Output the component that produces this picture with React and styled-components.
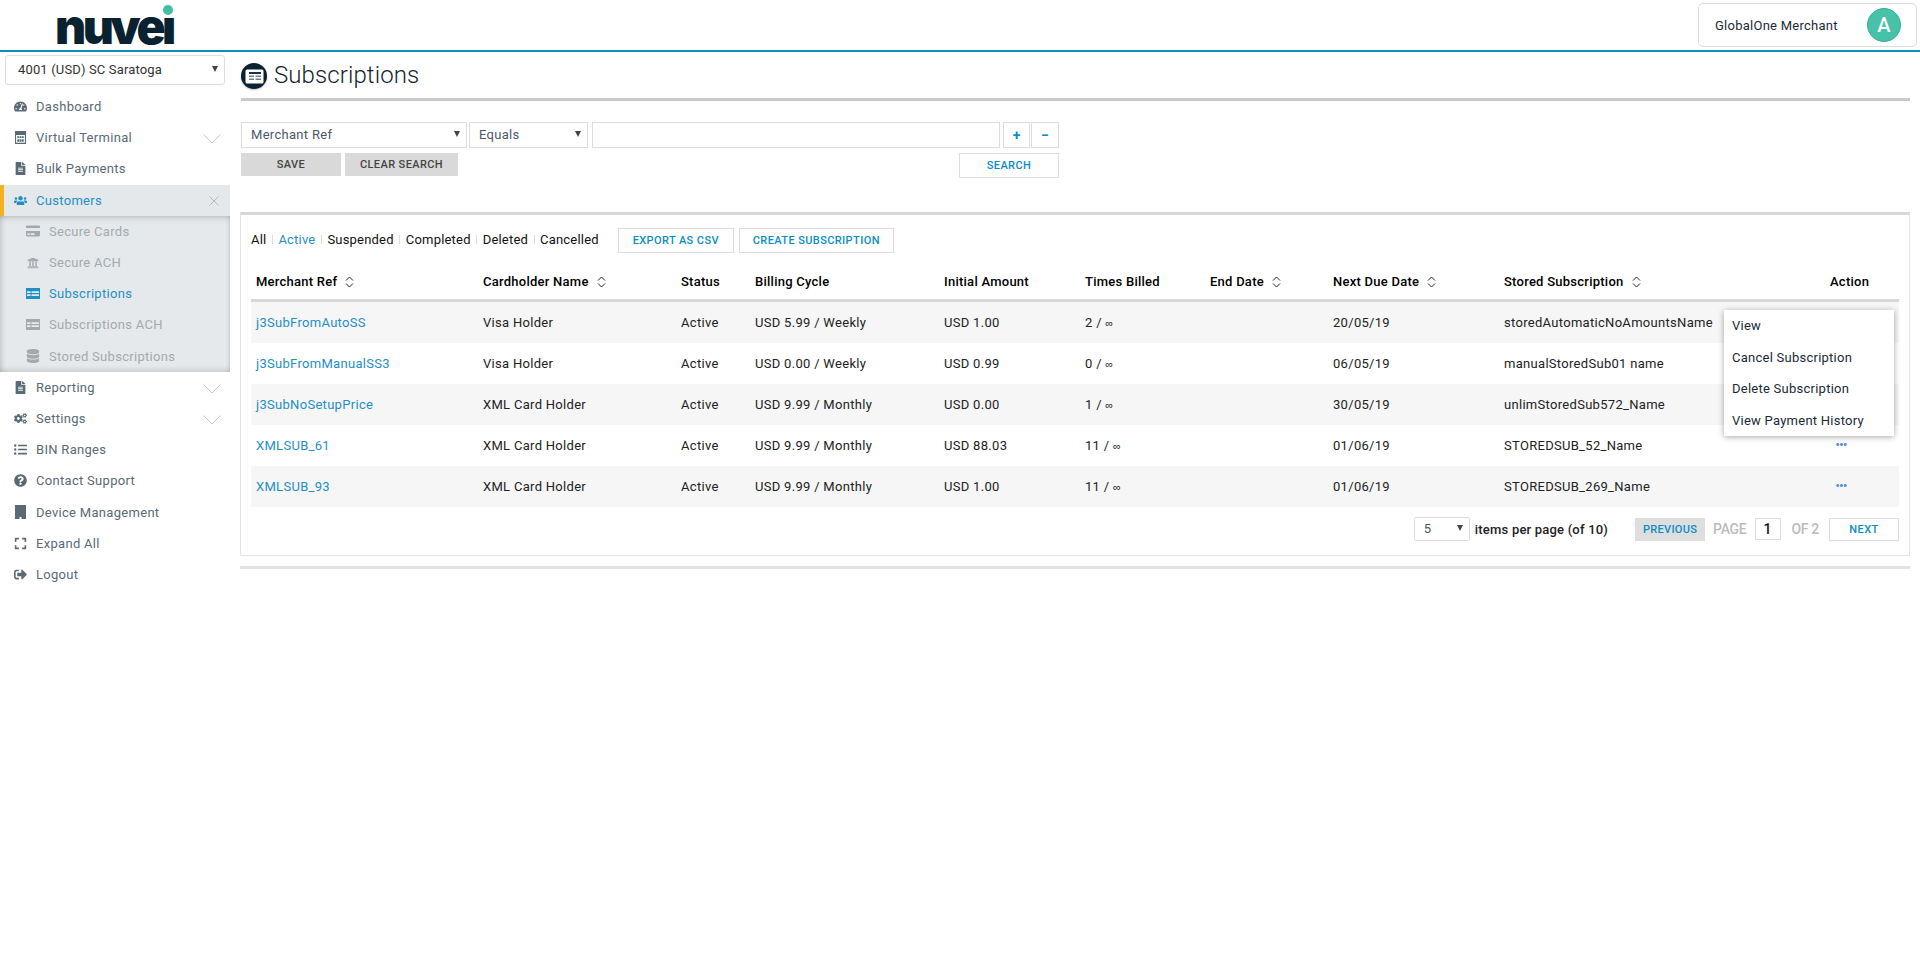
import React from 'react';
import styled, { createGlobalStyle } from 'styled-components';
import {
  FaTachometerAlt,
  FaFileAlt,
  FaUsers,
  FaCreditCard,
  FaUniversity,
  FaDatabase,
  FaCogs,
  FaListUl,
  FaQuestionCircle,
  FaExpand,
  FaSignOutAlt,
  FaEllipsisH,
} from 'react-icons/fa';

const GlobalStyle = createGlobalStyle`
  html, body {
    margin: 0;
    padding: 0;
    background: #fff;
    font-family: Roboto, "Liberation Sans", sans-serif;
    font-size: 13px;
    color: #111;
  }
  * { box-sizing: border-box; }
`;

const Page = styled.div`
  min-height: 969px;
  display: flex;
  flex-direction: column;
`;

const Header = styled.header`
  height: 52px;
  border-bottom: 2px solid #0b8dc4;
  display: flex;
  align-items: flex-start;
  justify-content: space-between;
  padding: 3px 3px 0 55px;
`;

const Logo = styled.div`
  position: relative;
  width: 120px;
  height: 48px;
  color: #0a2230;
  font-family: Inter, Roboto, sans-serif;
  font-weight: 900;
  font-size: 48px;
  line-height: 48px;
  letter-spacing: -3.5px;
`;

const LogoDot = styled.span`
  position: absolute;
  left: 108px;
  top: 2px;
  width: 10px;
  height: 10px;
  border-radius: 50%;
  background: #3fc0a5;
  box-shadow: 0 0 0 2px #fff;
`;

const UserBox = styled.div`
  width: 219px;
  height: 44px;
  border: 1px solid #ddd;
  border-radius: 5px;
  display: flex;
  align-items: center;
  justify-content: space-between;
  padding: 0 15px 0 16px;
  font-size: 13px;
  letter-spacing: 0.25px;
  color: #1a2a35;
`;

const Avatar = styled.span`
  width: 34px;
  height: 34px;
  border-radius: 50%;
  background: #45c2a8;
  border: 1px solid #3bb096;
  color: #fff;
  font-size: 20px;
  font-weight: 500;
  display: flex;
  align-items: center;
  justify-content: center;
`;

const Body = styled.div`
  display: flex;
  flex: 1;
`;

const Sidebar = styled.nav`
  width: 230px;
  flex: none;
  padding-top: 3px;
`;

const SelectBox = styled.div`
  position: relative;
  display: flex;
  align-items: center;
  flex: none;
  width: ${p => p.$w || 'auto'};
  height: ${p => p.$h || '26px'};
  padding: 0 0 2px ${p => p.$pad || '9px'};
  margin-left: ${p => p.$ml || '0'};
  border: 1px solid #ddd;
  border-radius: ${p => p.$radius || '0'};
  background: #fff;
  color: #4a5a66;
  letter-spacing: 0.3px;
  &::after {
    content: '';
    position: absolute;
    right: 6px;
    top: 50%;
    margin-top: -4px;
    border-left: 3px solid transparent;
    border-right: 3px solid transparent;
    border-top: 6px solid #444;
  }
`;

const AccountSelect = styled(SelectBox)`
  margin: 0 5px 6px;
  color: #333;
  letter-spacing: 0.15px;
`;

const NavItem = styled.a`
  display: flex;
  align-items: center;
  height: 31.2px;
  padding-left: ${p => (p.$active ? '9px' : '13px')};
  border-left: ${p => (p.$active ? '4px solid #f5b01f' : '0')};
  background: ${p => (p.$active ? '#e4e8ea' : 'transparent')};
  color: ${p => (p.$active ? '#1f8fc6' : '#5a6a75')};
  letter-spacing: 0.3px;
  position: relative;
`;

const NavIcon = styled.span`
  width: 14px;
  margin-right: 9px;
  display: flex;
  justify-content: center;
  font-size: 13px;
  flex: none;
`;

const Caret = styled.svg`
  position: absolute;
  right: ${p => p.$right || '9px'};
  top: ${p => p.$top || '12px'};
`;

const SubMenu = styled.div`
  background: #e6e9eb;
  box-shadow: inset 0 6px 6px -5px rgba(0, 0, 0, 0.22), inset 0 -6px 6px -5px rgba(0, 0, 0, 0.18),
    inset 6px 0 6px -5px rgba(0, 0, 0, 0.18), inset -4px 0 5px -4px rgba(0, 0, 0, 0.18);
`;

const SubItem = styled.a`
  display: flex;
  align-items: center;
  height: 31.2px;
  padding-left: 26px;
  color: ${p => (p.$active ? '#1f8fc6' : '#a3a9ae')};
  letter-spacing: 0.3px;
  ${NavIcon} {
    font-size: 14px;
  }
`;

const Main = styled.main`
  flex: 1;
  min-width: 0;
  padding: 0 10px 0 10px;
`;

const TitleBar = styled.div`
  height: 49px;
  margin-left: 1px;
  border-bottom: 3px solid #c5cbd0;
  display: flex;
  align-items: center;
  gap: 7px;
`;

const TitleIcon = styled.span`
  width: 26px;
  height: 26px;
  border-radius: 50%;
  background: #0a2230;
  display: flex;
  align-items: center;
  justify-content: center;
  margin-top: 2px;
  box-shadow: 0 1px 2px rgba(0, 0, 0, 0.25);
`;

const Title = styled.h1`
  margin: 0;
  font-size: 24px;
  font-weight: 300;
  letter-spacing: 0.1px;
  color: #15252f;
`;

const FilterForm = styled.div`
  width: 818px;
  margin: 21px 0 34px 1px;
`;

const FilterRow = styled.div`
  display: flex;
  align-items: center;
`;

const FilterActions = styled.div`
  display: flex;
  justify-content: space-between;
  align-items: flex-start;
  margin-top: 5px;
`;

const SearchInput = styled.input`
  flex: none;
  width: 408px;
  height: 26px;
  margin-left: 4px;
  border: 1px solid #ddd;
  background: #fff;
  outline: none;
`;

const SquareButton = styled.button`
  flex: none;
  width: ${p => p.$w};
  height: 26px;
  padding: 0;
  border: 1px solid #ddd;
  background: #fff;
  color: #0b8dc4;
  font: 700 14px Roboto, sans-serif;
  margin-left: ${p => p.$ml || '0'};
`;

const GreyButton = styled.button`
  width: ${p => p.$w};
  height: 23px;
  padding: 0;
  border: 0;
  background: #d9d9d9;
  color: #444;
  font: 500 11px Roboto, sans-serif;
  letter-spacing: 0.4px;
  margin-right: ${p => p.$mr || '0'};
`;

const OutlineButton = styled.button`
  width: ${p => p.$w};
  height: ${p => p.$h || '25px'};
  padding: 0;
  border: 1px solid #ddd;
  background: #fff;
  color: #0b8dc4;
  font: 500 11px Roboto, sans-serif;
  letter-spacing: 0.4px;
  margin-left: ${p => p.$ml || '0'};
`;

const Panel = styled.section`
  border: 1px solid #e5e5e5;
  border-top: 3px solid #d8d8d8;
  padding: 13px 10px 14px 10px;
`;

const TabRow = styled.div`
  display: flex;
  align-items: center;
  height: 25px;
`;

const Tab = styled.a`
  color: ${p => (p.$active ? '#1f8fc6' : '#111')};
  letter-spacing: 0.2px;
  padding-bottom: 2px;
  &:not(:last-of-type)::after {
    content: '';
    display: inline-block;
    width: 1px;
    height: 9px;
    background: #ddd;
    margin: 0 5.5px;
  }
`;

const TableWrap = styled.div`
  position: relative;
  margin-top: 10px;
`;

const Table = styled.table`
  width: 1648px;
  border-collapse: separate;
  border-spacing: 0;
  table-layout: fixed;
`;

const Th = styled.th`
  height: 39px;
  padding: 1px 5px 0;
  text-align: left;
  font-weight: 500;
  color: #000;
  letter-spacing: 0.25px;
  border-bottom: 3px solid #d8d8d8;
  white-space: nowrap;
`;

const Row = styled.tr`
  background: ${p => (p.$odd ? '#f6f6f6' : '#fff')};
`;

const Td = styled.td`
  height: 41px;
  padding: 0 5px 1px;
  color: #222;
  letter-spacing: 0.3px;
  white-space: nowrap;
`;

const RefLink = styled.a`
  color: #1f8fc6;
`;

const InfinityMark = styled.span`
  font-family: "Liberation Sans", sans-serif;
  font-size: 11px;
  letter-spacing: 0;
`;

const SortIcon = styled.svg`
  margin-left: 8px;
  vertical-align: -2px;
`;

const Dots = styled.span`
  display: inline-flex;
  align-items: center;
  justify-content: center;
  margin-left: ${p => (p.$open ? '0' : '6px')};
  width: ${p => (p.$open ? '21px' : 'auto')};
  height: ${p => (p.$open ? '25px' : 'auto')};
  padding-bottom: 3px;
  background: ${p => (p.$open ? '#a8a8a8' : 'transparent')};
  border-radius: 3px;
  color: #5b8fe8;
  font-size: 11px;
  vertical-align: middle;
`;

const Menu = styled.ul`
  position: absolute;
  top: 47px;
  right: 5px;
  width: 170px;
  height: 126px;
  margin: 0;
  padding: 0;
  list-style: none;
  background: #fff;
  box-shadow: 0 1px 6px rgba(0, 0, 0, 0.35);
`;

const MenuItem = styled.li`
  height: 31.5px;
  display: flex;
  align-items: center;
  padding-left: 8px;
  color: #1a2a35;
  letter-spacing: 0.25px;
`;

const Pager = styled.div`
  display: flex;
  align-items: center;
  justify-content: flex-end;
  height: 24px;
  margin-top: 10px;
`;

const PerPage = styled.span`
  margin: 0 27px 0 5px;
  font-weight: 500;
  color: #222;
  letter-spacing: 0.2px;
`;

const PageLabel = styled.span`
  color: #bbb;
  font-weight: 500;
  font-size: 14px;
  letter-spacing: -0.3px;
  margin: ${p => p.$m};
`;

const PageInput = styled.span`
  width: 26px;
  height: 22px;
  border: 1px solid #ddd;
  font-weight: 500;
  font-size: 14px;
  padding-left: 7px;
  display: flex;
  align-items: center;
`;

const PrevButton = styled.button`
  width: 70px;
  height: 23px;
  padding: 0;
  border: 0;
  background: #dedede;
  color: #0b8dc4;
  font: 500 11px Roboto, sans-serif;
  letter-spacing: 0.3px;
`;

const BottomRule = styled.div`
  height: 3px;
  margin-top: 10px;
  background: #e2e2e2;
`;

const chevron = (
  <Caret width="18" height="10" viewBox="0 0 18 10" fill="none" stroke="#c4c9cd" strokeWidth="1">
    <polyline points="0.5,0.5 9,9 17.5,0.5" />
  </Caret>
);

const closeX = (
  <Caret $right="11px" $top="11px" width="10" height="10" viewBox="0 0 10 10" fill="none" stroke="#b5babe" strokeWidth="1">
    <path d="M0.5 0.5 L9.5 9.5 M9.5 0.5 L0.5 9.5" />
  </Caret>
);

const sort = (
  <SortIcon width="9" height="12" viewBox="0 0 9 12" fill="none" stroke="#222" strokeWidth="1">
    <polyline points="1,4.5 4.5,1 8,4.5" />
    <polyline points="1,7.5 4.5,11 8,7.5" />
  </SortIcon>
);

// table-with-header card, used for the two subscription entries
const SubsIcon = () => (
  <svg width="14" height="11" viewBox="0 0 14 11" fill="currentColor" fillRule="evenodd">
    <path d="M0 0H14V11H0Z M1 3.2H4.5V5H1Z M5.5 3.2H13V5H5.5Z M1 6.2H4.5V8H1Z M5.5 6.2H13V8H5.5Z" />
  </svg>
);

const TitleCard = () => (
  <svg width="19" height="15" viewBox="0 0 19 15">
    <rect x="0.5" y="0.5" width="18" height="14" rx="1.5" fill="#fff" />
    <path d="M4 3H16V5H4Z" fill="#1c3442" />
    <path d="M4 6.5H9V8H4Z M10.5 6.5H16V8H10.5Z M4 9.5H9V11H4Z M10.5 9.5H16V11H10.5Z" fill="#6f7f8a" />
  </svg>
);

const CalcIcon = () => (
  <svg width="11" height="13" viewBox="0 0 12 14" fill="currentColor" fillRule="evenodd">
    <path d="M0 0H12V14H0Z M1.2 4.2V12.8H10.8V4.2Z" />
    <path d="M2.5 5.5H4.5V7.5H2.5Z M5 5.5H7V7.5H5Z M7.5 5.5H9.5V7.5H7.5Z M2.5 8.8H4.5V11.5H2.5Z M5 8.8H7V11.5H5Z M7.5 8.8H9.5V11.5H7.5Z" />
  </svg>
);

const DeviceIcon = () => (
  <svg width="11" height="14" viewBox="0 0 11 14" fill="currentColor">
    <path d="M0 0H11V14H6.5V12H4.5V14H0Z" />
  </svg>
);

const topNav = [
  { label: 'Dashboard', icon: <FaTachometerAlt /> },
  { label: 'Virtual Terminal', icon: <CalcIcon />, more: true },
  { label: 'Bulk Payments', icon: <FaFileAlt /> },
];

const subNav = [
  { label: 'Secure Cards', icon: <FaCreditCard /> },
  { label: 'Secure ACH', icon: <FaUniversity size={12} /> },
  { label: 'Subscriptions', icon: <SubsIcon />, active: true },
  { label: 'Subscriptions ACH', icon: <SubsIcon /> },
  { label: 'Stored Subscriptions', icon: <FaDatabase /> },
];

const bottomNav = [
  { label: 'Reporting', icon: <FaFileAlt />, more: true },
  { label: 'Settings', icon: <FaCogs />, more: true },
  { label: 'BIN Ranges', icon: <FaListUl /> },
  { label: 'Contact Support', icon: <FaQuestionCircle /> },
  { label: 'Device Management', icon: <DeviceIcon /> },
  { label: 'Expand All', icon: <FaExpand /> },
  { label: 'Logout', icon: <FaSignOutAlt /> },
];

const columns = [
  { label: 'Merchant Ref', width: 227, sortable: true },
  { label: 'Cardholder Name', width: 198, sortable: true },
  { label: 'Status', width: 74 },
  { label: 'Billing Cycle', width: 189 },
  { label: 'Initial Amount', width: 141 },
  { label: 'Times Billed', width: 125 },
  { label: 'End Date', width: 123, sortable: true },
  { label: 'Next Due Date', width: 171, sortable: true },
  { label: 'Stored Subscription', width: 326, sortable: true },
  { label: 'Action', width: 74 },
];

const rows = [
  ['j3SubFromAutoSS', 'Visa Holder', 'USD 5.99 / Weekly', 'USD 1.00', 2, '20/05/19', 'storedAutomaticNoAmountsName'],
  ['j3SubFromManualSS3', 'Visa Holder', 'USD 0.00 / Weekly', 'USD 0.99', 0, '06/05/19', 'manualStoredSub01 name'],
  ['j3SubNoSetupPrice', 'XML Card Holder', 'USD 9.99 / Monthly', 'USD 0.00', 1, '30/05/19', 'unlimStoredSub572_Name'],
  ['XMLSUB_61', 'XML Card Holder', 'USD 9.99 / Monthly', 'USD 88.03', 11, '01/06/19', 'STOREDSUB_52_Name'],
  ['XMLSUB_93', 'XML Card Holder', 'USD 9.99 / Monthly', 'USD 1.00', 11, '01/06/19', 'STOREDSUB_269_Name'],
];

const tabs = ['All', 'Active', 'Suspended', 'Completed', 'Deleted', 'Cancelled'];
const actions = ['View', 'Cancel Subscription', 'Delete Subscription', 'View Payment History'];

function renderNav(items) {
  return items.map(item => (
    <NavItem key={item.label}>
      <NavIcon>{item.icon}</NavIcon>
      {item.label}
      {item.more && chevron}
    </NavItem>
  ));
}

export default function App() {
  return (
    <Page>
      <GlobalStyle />
      <Header>
        <Logo>
          nuvei
          <LogoDot />
        </Logo>
        <UserBox>
          GlobalOne Merchant
          <Avatar>A</Avatar>
        </UserBox>
      </Header>
      <Body>
        <Sidebar>
          <AccountSelect $h="30px" $pad="12px" $radius="3px">
            4001 (USD) SC Saratoga
          </AccountSelect>
          {renderNav(topNav)}
          <NavItem $active>
            <NavIcon>
              <FaUsers />
            </NavIcon>
            Customers
            {closeX}
          </NavItem>
          <SubMenu>
            {subNav.map(item => (
              <SubItem key={item.label} $active={item.active}>
                <NavIcon>{item.icon}</NavIcon>
                {item.label}
              </SubItem>
            ))}
          </SubMenu>
          {renderNav(bottomNav)}
        </Sidebar>
        <Main>
          <TitleBar>
            <TitleIcon>
              <TitleCard />
            </TitleIcon>
            <Title>Subscriptions</Title>
          </TitleBar>
          <FilterForm>
            <FilterRow>
              <SelectBox $w="226px">Merchant Ref</SelectBox>
              <SelectBox $w="119px" $ml="2px">Equals</SelectBox>
              <SearchInput />
              <SquareButton $w="27px" $ml="3px">+</SquareButton>
              <SquareButton $w="28px" $ml="1px">−</SquareButton>
            </FilterRow>
            <FilterActions>
              <div>
                <GreyButton $w="100px" $mr="4px">SAVE</GreyButton>
                <GreyButton $w="113px">CLEAR SEARCH</GreyButton>
              </div>
              <OutlineButton $w="100px">SEARCH</OutlineButton>
            </FilterActions>
          </FilterForm>
          <Panel>
            <TabRow>
              {tabs.map(tab => (
                <Tab key={tab} $active={tab === 'Active'}>
                  {tab}
                </Tab>
              ))}
              <OutlineButton $w="116px" $ml="19px">EXPORT AS CSV</OutlineButton>
              <OutlineButton $w="155px" $ml="5px">CREATE SUBSCRIPTION</OutlineButton>
            </TabRow>
            <TableWrap>
              <Table>
                <colgroup>
                  {columns.map(col => (
                    <col key={col.label} width={col.width} />
                  ))}
                </colgroup>
                <thead>
                  <tr>
                    {columns.map(col => (
                      <Th key={col.label}>
                        {col.label}
                        {col.sortable && sort}
                      </Th>
                    ))}
                  </tr>
                </thead>
                <tbody>
                  {rows.map((row, index) => (
                    <Row key={row[0]} $odd={index % 2 === 0}>
                      <Td>
                        <RefLink>{row[0]}</RefLink>
                      </Td>
                      <Td>{row[1]}</Td>
                      <Td>Active</Td>
                      <Td>{row[2]}</Td>
                      <Td>{row[3]}</Td>
                      <Td>
                        {row[4]} / <InfinityMark>∞</InfinityMark>
                      </Td>
                      <Td />
                      <Td>{row[5]}</Td>
                      <Td>{row[6]}</Td>
                      <Td>
                        <Dots $open={index === 0}>
                          <FaEllipsisH />
                        </Dots>
                      </Td>
                    </Row>
                  ))}
                </tbody>
              </Table>
              <Menu>
                {actions.map(action => (
                  <MenuItem key={action}>{action}</MenuItem>
                ))}
              </Menu>
            </TableWrap>
            <Pager>
              <SelectBox $w="56px" $h="24px" $radius="2px">5</SelectBox>
              <PerPage>items per page (of 10)</PerPage>
              <PrevButton>PREVIOUS</PrevButton>
              <PageLabel $m="0 9px 0 8px">PAGE</PageLabel>
              <PageInput>1</PageInput>
              <PageLabel $m="0 10px">OF 2</PageLabel>
              <OutlineButton $w="70px" $h="23px">NEXT</OutlineButton>
            </Pager>
          </Panel>
          <BottomRule />
        </Main>
      </Body>
    </Page>
  );
}
